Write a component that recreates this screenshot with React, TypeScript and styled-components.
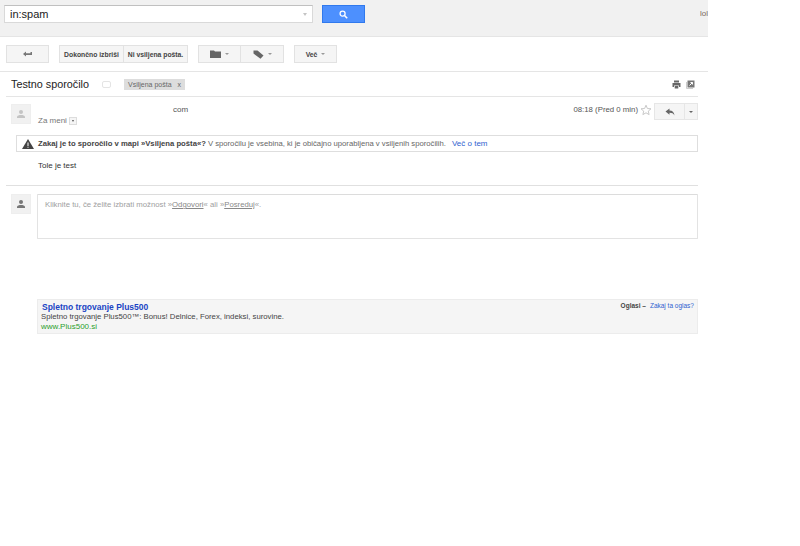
import React from 'react';
import styled, { createGlobalStyle } from 'styled-components';

const GlobalStyle = createGlobalStyle`
  html, body {
    margin: 0;
    padding: 0;
    background: #fff;
    font-family: Arial, "Liberation Sans", sans-serif;
  }
`;

const Page = styled.div`
  width: 708px;
  height: 546px;
  overflow: hidden;
`;

const Header = styled.div`
  height: 37px;
  box-sizing: border-box;
  background: #f1f1f1;
  border-bottom: 1px solid #e5e5e5;
  display: flex;
  align-items: flex-start;
  padding: 5px 0 0 4px;
  position: relative;
`;

const SearchBox = styled.div`
  width: 309px;
  height: 18px;
  box-sizing: border-box;
  background: #fff;
  border: 1px solid #d9d9d9;
  border-top-color: #c0c0c0;
  display: flex;
  align-items: center;
  justify-content: space-between;
  padding: 0 5px 0 5px;
  font-size: 11px;
  color: #222;
`;

const SearchCaret = styled.span`
  width: 0;
  height: 0;
  border-left: 2.5px solid transparent;
  border-right: 2.5px solid transparent;
  border-top: 3px solid #c4c4c4;
`;

const SearchButton = styled.div`
  width: 43px;
  height: 18px;
  margin-left: 9px;
  background: #4d90fe;
  border: 1px solid #3079ed;
  box-sizing: border-box;
  display: flex;
  align-items: center;
  justify-content: center;
`;

const UserName = styled.span`
  position: absolute;
  right: 0;
  top: 9px;
  font-size: 8px;
  color: #7a6a60;
  width: 8px;
  overflow: hidden;
`;

const Toolbar = styled.div`
  height: 35px;
  box-sizing: border-box;
  display: flex;
  align-items: flex-start;
  padding: 8px 0 0 6px;
  border-bottom: 1px solid #e5e5e5;
`;

const ButtonGroup = styled.div<{ $gap: number }>`
  display: flex;
  margin-right: ${props => props.$gap}px;
`;

const ToolButton = styled.div<{ $width: number }>`
  width: ${props => props.$width}px;
  height: 18px;
  box-sizing: border-box;
  background: #f5f5f5;
  border: 1px solid #e2e2e2;
  margin-left: -1px;
  display: flex;
  align-items: center;
  justify-content: center;
  gap: 4px;
  font-size: 6.8px;
  font-weight: bold;
  color: #444;
  white-space: nowrap;
  &:first-child {
    margin-left: 0;
  }
`;

const Caret = styled.span`
  width: 0;
  height: 0;
  border-left: 2px solid transparent;
  border-right: 2px solid transparent;
  border-top: 2.5px solid #999;
`;

const Content = styled.div`
  width: 692px;
  margin-left: 6px;
`;

const SubjectRow = styled.div`
  height: 25px;
  box-sizing: border-box;
  border-bottom: 1px solid #e5e5e5;
  display: flex;
  align-items: center;
  padding-left: 5px;
`;

const Subject = styled.span`
  font-size: 10.8px;
  color: #222;
  width: 91px;
`;

const ImportanceMark = styled.span`
  width: 7px;
  height: 5px;
  border: 1px solid #e4e4e4;
  border-radius: 2px;
  margin-right: 13px;
`;

const LabelChip = styled.span`
  width: 61px;
  height: 11px;
  box-sizing: border-box;
  background: #dddddd;
  color: #666;
  font-size: 7px;
  padding: 0 4px;
  display: flex;
  align-items: center;
  justify-content: space-between;
`;

const SubjectIcons = styled.div`
  margin-left: auto;
  display: flex;
  gap: 5px;
  align-items: center;
  padding-right: 3px;
`;

const MessageHead = styled.div`
  display: flex;
  padding: 7px 0 0 5px;
  height: 32px;
  box-sizing: border-box;
`;

const Avatar = styled.div`
  width: 20px;
  height: 20px;
  background: #f1f1f1;
  border: 1px solid #eee;
  box-sizing: border-box;
  display: flex;
  align-items: center;
  justify-content: center;
  flex-shrink: 0;
`;

const Sender = styled.div`
  margin-left: 7px;
  width: 200px;
  font-size: 8px;
  color: #777;
`;

const SenderAddress = styled.div`
  margin-left: 135px;
  height: 11px;
  line-height: 12px;
  color: #555;
`;

const ToMe = styled.div`
  display: flex;
  align-items: center;
  gap: 2px;
  height: 11px;
`;

const ToMeArrow = styled.span`
  width: 6px;
  height: 6px;
  border: 1px solid #ddd;
  background: #f5f5f5;
  display: flex;
  align-items: center;
  justify-content: center;
  &::after {
    content: '';
    border-left: 1.5px solid transparent;
    border-right: 1.5px solid transparent;
    border-top: 2px solid #555;
  }
`;

const MessageMeta = styled.div`
  margin-left: auto;
  display: flex;
  align-items: flex-start;
  font-size: 7.8px;
  color: #555;
`;

const Time = styled.span`
  line-height: 12px;
  margin-right: 2px;
`;

const StarWrap = styled.span`
  width: 12px;
  height: 12px;
  margin-right: 2px;
`;

const ReplyButton = styled.div`
  width: 31px;
  height: 17px;
  margin-top: -1px;
  box-sizing: border-box;
  background: #f5f5f5;
  border: 1px solid #e6e6e6;
  display: flex;
  align-items: center;
  justify-content: center;
`;

const ReplyMore = styled(ReplyButton)`
  width: 14px;
  margin-left: -1px;
  &::after {
    content: '';
    border-left: 2px solid transparent;
    border-right: 2px solid transparent;
    border-top: 2.5px solid #666;
  }
`;

const SpamNotice = styled.div`
  margin: 6px 0 0 10px;
  height: 17px;
  box-sizing: border-box;
  border: 1px solid #dedede;
  display: flex;
  align-items: center;
  padding-left: 5px;
  font-size: 7.7px;
  color: #666;
  white-space: nowrap;
`;

const NoticeLead = styled.b`
  color: #444;
  margin-left: 4px;
  margin-right: 2px;
`;

const BlueLink = styled.a`
  color: #2f5fd0;
`;

const NoticeLink = styled(BlueLink)`
  margin-left: 6px;
  font-size: 8px;
`;

const Body = styled.div`
  margin-left: 32px;
  height: 33px;
  padding-top: 8px;
  box-sizing: border-box;
  font-size: 8px;
  line-height: 11px;
  color: #333;
`;

const ReplyRow = styled.div`
  border-top: 1px solid #e0e0e0;
  padding: 8px 0 0 5px;
  display: flex;
`;

const ReplyBox = styled.div`
  margin-left: 6px;
  flex: 1;
  height: 45px;
  box-sizing: border-box;
  border: 1px solid #e3e3e3;
  border-top-color: #dcdcdc;
  border-radius: 1px;
  padding: 5px 7px;
  font-size: 7.75px;
  color: #a0a0a0;
`;

const ReplyAction = styled.span`
  text-decoration: underline;
  color: #888;
`;

const AdBox = styled.div`
  margin: 60px 0 0 31px;
  height: 35px;
  box-sizing: border-box;
  background: #f5f5f5;
  border: 1px solid #ececec;
  padding: 3px 3px 0;
  display: flex;
  justify-content: space-between;
`;

const AdTitle = styled.div`
  font-size: 8.5px;
  line-height: 9px;
  font-weight: bold;
  color: #1a44c4;
  margin-left: 1px;
`;

const AdLine = styled.div`
  font-size: 7.75px;
  line-height: 10px;
  color: #444;
`;

const AdUrl = styled(AdLine)`
  font-size: 8px;
  color: #2ca02c;
`;

const AdMeta = styled.div`
  font-size: 6.5px;
  line-height: 6px;
  color: #444;
  font-weight: bold;
`;

const AdMetaLink = styled(BlueLink)`
  font-weight: normal;
  margin-left: 4px;
`;

const PersonIcon = ({ color }: { color: string }) => (
  <svg width="10" height="10" viewBox="0 0 10 10">
    <circle cx="5" cy="3" r="2" fill={color} />
    <path d="M1 9 V8 C1 6.4 3.2 6 5 6 C6.8 6 9 6.4 9 8 V9 Z" fill={color} />
  </svg>
);

const ReplyIcon = ({ color }: { color: string }) => (
  <svg width="10" height="8" viewBox="0 0 10 8">
    <path d="M0.5 3.5 L4.5 0.5 V2.5 C7.5 2.5 9 4 9.5 7.5 C8.5 5.5 7 4.8 4.5 4.8 V6.8 Z" fill={color} />
  </svg>
);

export default function App() {
  return (
    <Page>
      <GlobalStyle />
      <Header>
        <SearchBox>
          in:spam
          <SearchCaret />
        </SearchBox>
        <SearchButton>
          <svg width="9" height="9" viewBox="0 0 9 9">
            <circle cx="3.6" cy="3.6" r="2.5" fill="none" stroke="#fff" strokeWidth="1.3" />
            <path d="M5.5 5.5 L8.2 8.2" stroke="#fff" strokeWidth="1.6" />
          </svg>
        </SearchButton>
        <UserName>lol</UserName>
      </Header>
      <Toolbar>
        <ButtonGroup $gap={10}>
          <ToolButton $width={43}>
            <svg width="9" height="6" viewBox="0 0 9 6">
              <path d="M0 3 L3 0.5 V2.2 H9 V4 H3 V5.5 Z M7.5 1 H9 V3 H7.5 Z" fill="#777" />
            </svg>
          </ToolButton>
        </ButtonGroup>
        <ButtonGroup $gap={10}>
          <ToolButton $width={65}>Dokončno izbriši</ToolButton>
          <ToolButton $width={65}>Ni vsiljena pošta.</ToolButton>
        </ButtonGroup>
        <ButtonGroup $gap={10}>
          <ToolButton $width={43}>
            <svg width="11" height="8" viewBox="0 0 11 8">
              <path d="M0 0.5 H4 L5 1.5 H11 V8 H0 Z" fill="#666" />
            </svg>
            <Caret />
          </ToolButton>
          <ToolButton $width={44}>
            <svg width="11" height="9" viewBox="0 0 11 9">
              <path d="M0.5 0.5 H4.5 L10.5 5.5 L7.5 8.8 L0.5 3.5 Z" fill="#666" />
            </svg>
            <Caret />
          </ToolButton>
        </ButtonGroup>
        <ButtonGroup $gap={0}>
          <ToolButton $width={43}>
            Več
            <Caret />
          </ToolButton>
        </ButtonGroup>
      </Toolbar>
      <Content>
        <SubjectRow>
          <Subject>Testno sporočilo</Subject>
          <ImportanceMark />
          <LabelChip>
            Vsiljena pošta
            <span>x</span>
          </LabelChip>
          <SubjectIcons>
            <svg width="9" height="9" viewBox="0 0 9 9">
              <path d="M2 0.5 H7 V2.5 H2 Z M0.5 3 H8.5 V7 H7 V5.5 H2 V7 H0.5 Z M2.7 6 H6.3 V8.5 H2.7 Z" fill="#666" />
            </svg>
            <svg width="9" height="9" viewBox="0 0 9 9">
              <path d="M1.5 0.5 H8.5 V7.5 H1.5 Z" fill="#777" />
              <path d="M0.5 2 V8.5 H7" fill="none" stroke="#ccc" />
              <path d="M3.5 5.5 L6.5 2.5 M4.5 2.5 H6.5 V4.5" fill="none" stroke="#fff" />
            </svg>
          </SubjectIcons>
        </SubjectRow>
        <MessageHead>
          <Avatar>
            <PersonIcon color="#c4c4c4" />
          </Avatar>
          <Sender>
            <SenderAddress>com</SenderAddress>
            <ToMe>
              Za meni
              <ToMeArrow />
            </ToMe>
          </Sender>
          <MessageMeta>
            <Time>08:18 (Pred 0 min)</Time>
            <StarWrap>
              <svg width="12" height="12" viewBox="0 0 12 12">
                <path d="M6 1.2 L7.4 4.5 L11 4.8 L8.3 7.1 L9.1 10.6 L6 8.8 L2.9 10.6 L3.7 7.1 L1 4.8 L4.6 4.5 Z" fill="none" stroke="#c8c8c8" />
              </svg>
            </StarWrap>
            <ReplyButton>
              <ReplyIcon color="#666" />
            </ReplyButton>
            <ReplyMore />
          </MessageMeta>
        </MessageHead>
        <SpamNotice>
          <svg width="12" height="10" viewBox="0 0 12 10">
            <path d="M6 0 L12 10 H0 Z" fill="#444" />
            <path d="M5.5 3.5 H6.5 V7 H5.5 Z M5.5 7.8 H6.5 V8.8 H5.5 Z" fill="#fff" />
          </svg>
          <NoticeLead>Zakaj je to sporočilo v mapi »Vsiljena pošta«?</NoticeLead>
          V sporočilu je vsebina, ki je običajno uporabljena v vsiljenih sporočilih.
          <NoticeLink>Več o tem</NoticeLink>
        </SpamNotice>
        <Body>Tole je test</Body>
        <ReplyRow>
          <Avatar>
            <PersonIcon color="#777" />
          </Avatar>
          <ReplyBox>
            Kliknite tu, če želite izbrati možnost »<ReplyAction>Odgovori</ReplyAction>« ali »<ReplyAction>Posreduj</ReplyAction>«.
          </ReplyBox>
        </ReplyRow>
        <AdBox>
          <div>
            <AdTitle>Spletno trgovanje Plus500</AdTitle>
            <AdLine>Spletno trgovanje Plus500™: Bonus! Delnice, Forex, indeksi, surovine.</AdLine>
            <AdUrl>www.Plus500.si</AdUrl>
          </div>
          <AdMeta>
            Oglasi –<AdMetaLink>Zakaj ta oglas?</AdMetaLink>
          </AdMeta>
        </AdBox>
      </Content>
    </Page>
  );
}
